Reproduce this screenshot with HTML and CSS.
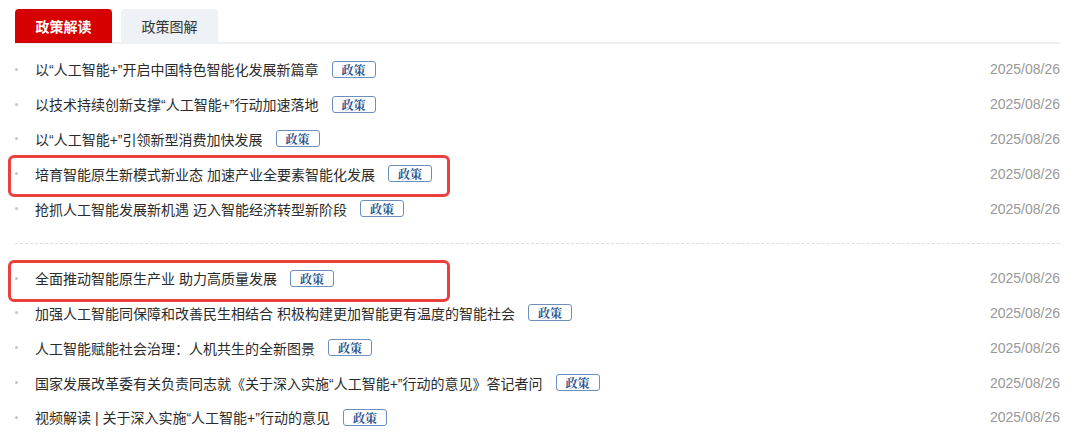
FILE: index.html
```html
<!DOCTYPE html>
<html lang="zh-CN">
<head>
<meta charset="utf-8">
<title>政策解读</title>
<link rel="stylesheet" href="styles.css">
</head>
<body>
<div class="panel">
  <div class="tabs">
    <div class="tab tab-active">政策解读</div>
    <div class="tab">政策图解</div>
  </div>
  <ul class="list">
    <li class="item"><span class="dot"></span><a class="title">以“人工智能+”开启中国特色智能化发展新篇章</a><span class="badge">政策</span><span class="date">2025/08/26</span></li>
    <li class="item"><span class="dot"></span><a class="title">以技术持续创新支撑“人工智能+”行动加速落地</a><span class="badge">政策</span><span class="date">2025/08/26</span></li>
    <li class="item"><span class="dot"></span><a class="title">以“人工智能+”引领新型消费加快发展</a><span class="badge">政策</span><span class="date">2025/08/26</span></li>
    <li class="item marked"><span class="dot"></span><a class="title">培育智能原生新模式新业态 加速产业全要素智能化发展</a><span class="badge">政策</span><span class="date">2025/08/26</span></li>
    <li class="item"><span class="dot"></span><a class="title">抢抓人工智能发展新机遇 迈入智能经济转型新阶段</a><span class="badge">政策</span><span class="date">2025/08/26</span></li>
  </ul>
  <div class="sep"></div>
  <ul class="list">
    <li class="item marked"><span class="dot"></span><a class="title">全面推动智能原生产业 助力高质量发展</a><span class="badge">政策</span><span class="date">2025/08/26</span></li>
    <li class="item"><span class="dot"></span><a class="title">加强人工智能同保障和改善民生相结合 积极构建更加智能更有温度的智能社会</a><span class="badge">政策</span><span class="date">2025/08/26</span></li>
    <li class="item"><span class="dot"></span><a class="title">人工智能赋能社会治理：人机共生的全新图景</a><span class="badge">政策</span><span class="date">2025/08/26</span></li>
    <li class="item"><span class="dot"></span><a class="title">国家发展改革委有关负责同志就《关于深入实施“人工智能+”行动的意见》答记者问</a><span class="badge">政策</span><span class="date">2025/08/26</span></li>
    <li class="item"><span class="dot"></span><a class="title">视频解读 | 关于深入实施“人工智能+”行动的意见</a><span class="badge">政策</span><span class="date">2025/08/26</span></li>
  </ul>
</div>
</body>
</html>
```
FILE: styles.css
```css
* { box-sizing: border-box; }
html, body { margin: 0; padding: 0; background: #fff; }
body {
  font-family: "Liberation Sans", "Noto Sans CJK SC", sans-serif;
  font-size: 14px;
  color: #2b2b2b;
}
.panel {
  padding: 9px 20px 0 15px;
}
.tabs {
  display: flex;
  gap: 9px;
  height: 35px;
  border-bottom: 2px solid #eeeeee;
}
.tab {
  width: 97px;
  height: 34px;
  display: flex;
  align-items: center;
  justify-content: center;
  background: #eef1f5;
  color: #333;
  border-radius: 4px 4px 0 0;
  font-size: 14px;
}
.tab-active {
  background: #d60000;
  color: #fff;
  font-weight: 700;
}
.list {
  list-style: none;
  margin: 0;
  padding: 0;
}
.tabs + .list { margin-top: 8px; }
.item {
  position: relative;
  display: flex;
  align-items: center;
  height: 34.8px;
}
.dot {
  width: 3px;
  height: 3px;
  border-radius: 50%;
  background: #c4c4c4;
  margin-right: 17px;
  flex: none;
}
.title {
  color: #2b2b2b;
  text-decoration: none;
  white-space: nowrap;
}
.badge {
  margin-left: 13px;
  width: 44px;
  height: 17px;
  border: 1px solid #6c8fbd;
  border-radius: 3px;
  color: #2a5590;
  font-family: "Noto Serif CJK SC", "Noto Sans CJK SC", serif;
  font-weight: 700;
  font-size: 12px;
  line-height: 15px;
  text-align: center;
  flex: none;
}
.date {
  margin-left: auto;
  color: #999;
  font-size: 14px;
}
.sep {
  height: 34.8px;
  display: flex;
  align-items: center;
}
.sep::before {
  content: "";
  display: block;
  width: 100%;
  border-top: 1px dashed #dddddd;
}
.marked::after {
  content: "";
  position: absolute;
  left: -7px;
  width: 436px;
  top: -1px;
  height: 36px;
  border: 3px solid #e8413e;
  border-radius: 6px;
  pointer-events: none;
}
```
